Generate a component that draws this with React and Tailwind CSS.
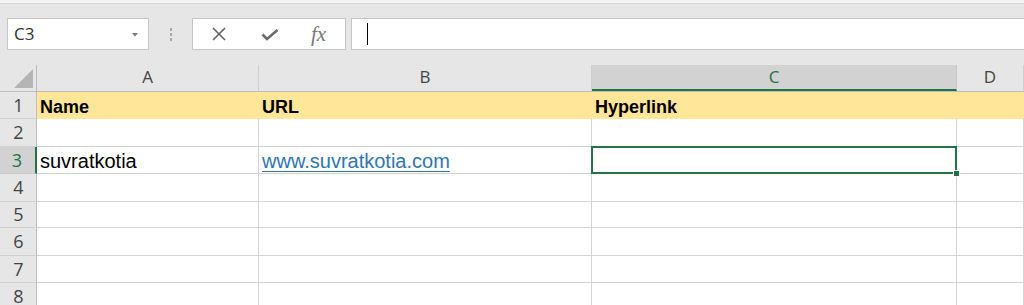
import { useState } from "react";

const cols = [
  { key: "A", w: "w-[222px]" },
  { key: "B", w: "w-[333px]" },
  { key: "C", w: "w-[365px]" },
  { key: "D", w: "flex-1" },
];

const rowHeights = ["h-[27px]", "h-[28px]", "h-[27px]", "h-[28px]", "h-[26px]", "h-[28px]", "h-[27px]", "h-[27px]"];

const data = {
  1: { A: "Name", B: "URL", C: "Hyperlink" },
  3: { A: "suvratkotia", B: "www.suvratkotia.com" },
};

const cellFont = { fontFamily: "'Liberation Sans', Arial, sans-serif" };

export default function App() {
  const [active] = useState({ row: 3, col: "C" });

  return (
    <div className="w-[1024px] h-[305px] overflow-hidden bg-[#e6e6e6] text-[#222]">

      {/* TOP STRIP */}
      <div className="h-[4px] bg-[#f3f3f3] border-b border-[#dadada]" />

      {/* FORMULA BAR */}
      <div className="flex items-center h-[32px] mt-[14px] pl-[7px]">
        <div className="relative w-[142px] h-full bg-white border border-[#c6c6c6] flex items-center pl-[6px]">
          <span className="text-[17px] text-[#333] font-['Open_Sans',sans-serif]">C3</span>
          <svg className="absolute right-[10px] top-[14px]" width="6" height="4" viewBox="0 0 6 4">
            <path d="M0 0 L6 0 L3 3.5 Z" fill="#7a7a7a" />
          </svg>
        </div>

        <div className="w-[43px] flex flex-col items-center gap-[2px]">
          <div className="w-[2px] h-[3px] bg-[#a8a8a8]" />
          <div className="w-[2px] h-[3px] bg-[#a8a8a8]" />
          <div className="w-[2px] h-[3px] bg-[#a8a8a8]" />
        </div>

        <div className="w-[154px] h-full bg-white border border-[#c6c6c6] flex items-center">
          <svg className="ml-[19px]" width="14" height="14" viewBox="0 0 14 14">
            <path d="M1 1 L13 13 M13 1 L1 13" stroke="#666" strokeWidth="1.7" fill="none" />
          </svg>
          <svg className="ml-[35px] mt-[2px]" width="18" height="12" viewBox="0 0 18 12">
            <path d="M1.5 5.5 L6 10 L16.5 1" stroke="#6a6a6a" strokeWidth="2.6" fill="none" />
          </svg>
          <span className="ml-[32px] text-[21px] italic text-[#777] font-['Liberation_Serif',serif] leading-none">
            fx
          </span>
        </div>

        <div className="ml-[5px] flex-1 h-full bg-white border border-r-0 border-[#c6c6c6] flex items-center pl-[15px]">
          <div className="w-[1px] h-[22px] bg-black" />
        </div>
      </div>

      {/* SHEET */}
      <div className="mt-[15px]">

        {/* COLUMN HEADERS */}
        <div className="flex h-[27px] border-b border-[#bdbdbd] font-['Open_Sans',sans-serif] text-[17px] text-[#444]">
          <div className="w-[37px] border-r border-[#bdbdbd] flex items-end justify-end pr-[3px] pb-[3px]">
            <svg width="19" height="19" viewBox="0 0 19 19">
              <path d="M19 0 L19 19 L0 19 Z" fill="#b5b5b5" />
            </svg>
          </div>
          {cols.map((c) => (
            <div
              key={c.key}
              className={
                c.key === active.col
                  ? `${c.w} bg-[#d2d2d2] border-r border-[#c8c8c8] border-b-2 border-b-[#217346] flex items-end justify-center pb-[0px] text-[#217346]`
                  : `${c.w} border-r border-[#cfcfcf] flex items-end justify-center pb-[2px]`
              }
            >
              {c.key}
            </div>
          ))}
        </div>

        {/* ROWS */}
        {rowHeights.map((h, i) => {
          const r = i + 1;
          const isHeader = r === 1;
          const isActiveRow = r === active.row;
          return (
            <div key={r} className={`flex ${h}`}>
              <div
                className={
                  isActiveRow
                    ? "w-[37px] bg-[#d2d2d2] border-r-2 border-[#217346] border-b border-b-[#c8c8c8] flex items-center justify-center pr-[1px] text-[#217346] font-['Open_Sans',sans-serif] text-[18px]"
                    : "w-[37px] border-r border-[#bdbdbd] border-b border-b-[#d0d0d0] flex items-center justify-center pl-[1px] text-[#444] font-['Open_Sans',sans-serif] text-[18px]"
                }
              >
                {r}
              </div>
              {cols.map((c) => {
                const val = data[r]?.[c.key];
                const isActive = isActiveRow && c.key === active.col;
                let cls = `${c.w} relative flex items-end pl-[3px] pb-[2px] leading-none`;
                if (isHeader) cls += " bg-[#ffe699] border-b border-[#ffe699] font-bold text-[18px] text-black";
                else cls += " bg-white border-b border-r border-[#d4d4d4] text-[20px] text-black";
                if (isActive) cls += " z-10";
                return (
                  <div key={c.key} className={cls} style={cellFont}>
                    {c.key === "B" && r === 3 ? (
                      <span className="text-[#2e75b6] underline underline-offset-[3px] decoration-[1px]">{val}</span>
                    ) : (
                      val
                    )}
                    {isActive && (
                      <>
                        <div className="absolute -left-[1px] -top-[1px] -right-[1px] -bottom-[1px] border-2 border-[#217346]" />
                        <div className="absolute -right-[4px] -bottom-[4px] w-[7px] h-[7px] bg-[#217346] border border-white" />
                      </>
                    )}
                  </div>
                );
              })}
            </div>
          );
        })}
      </div>
    </div>
  );
}
